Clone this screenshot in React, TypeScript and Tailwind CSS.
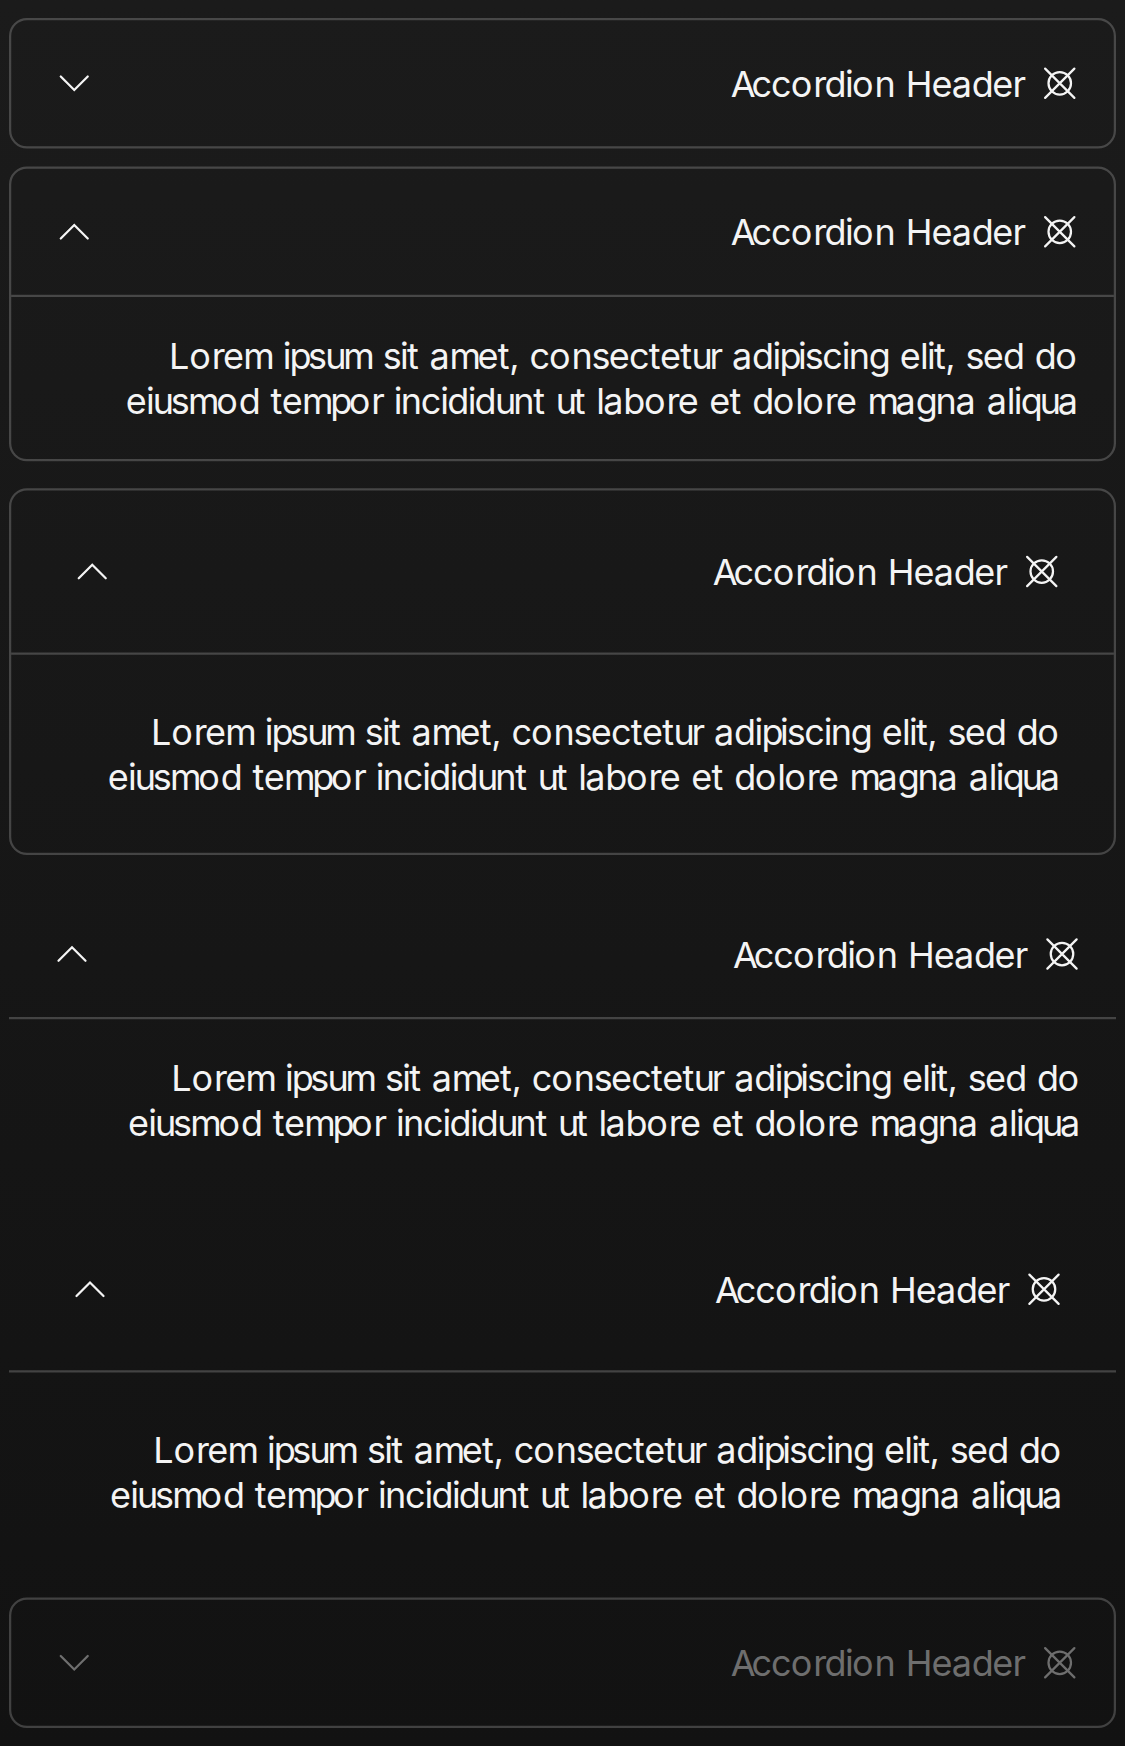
import clsx from "clsx";

const LOREM =
  "Lorem ipsum sit amet, consectetur adipiscing elit, sed do eiusmod tempor incididunt ut labore et dolore magna aliqua";

/* Per-glyph tracking, in the 16px space the accordions are laid out in. */
const TRACKING: Record<string, string> = {
  A: "tracking-[-1.8px]",
  H: "tracking-[-0.49px]",
  L: "tracking-[-0.05px]",
  a: "tracking-[-0.08px]",
  b: "tracking-[-0.6px]",
  c: "tracking-[-0.44px]",
  d: "tracking-[-0.7px]",
  e: "tracking-[-0.33px]",
  g: "tracking-[-1.01px]",
  i: "tracking-[-0.81px]",
  l: "tracking-[-0.78px]",
  m: "tracking-[-1.52px]",
  n: "tracking-[-0.55px]",
  o: "tracking-[0.41px]",
  p: "tracking-[-1.6px]",
  q: "tracking-[-1.4px]",
  r: "tracking-[-1.02px]",
  s: "tracking-[-0.78px]",
  t: "tracking-[-0.23px]",
  u: "tracking-[-1.46px]",
  ",": "tracking-[-0.61px]",
  " ": "tracking-[0.5px]",
};

function SnappedText({ text }: { text: string }) {
  return (
    <>
      {text.split("").map((char, i) => (
        <span key={i} className={TRACKING[char]}>{char}</span>
      ))}
    </>
  );
}

function Chevron({ open }: { open: boolean }) {
  return (
    <svg viewBox="0 0 24 24" className="size-6 shrink-0" fill="none" stroke="currentColor" strokeWidth="1" strokeLinecap="round">
      <path d={open ? "M6 15 12 9 18 15" : "M6 9 12 15 18 9"} />
    </svg>
  );
}

function TargetIcon() {
  return (
    <svg viewBox="0 0 16 16" className="size-4 shrink-0" fill="none" stroke="currentColor" strokeWidth="1" strokeLinecap="round">
      <circle cx="8" cy="8" r="5" />
      <path d="M1.5 1.5 14.5 14.5M14.5 1.5 1.5 14.5" />
    </svg>
  );
}

type AccordionProps = {
  open?: boolean;
  bordered?: boolean;
  roomy?: boolean;
  disabled?: boolean;
  className?: string;
};

function Accordion({ open = false, bordered = false, roomy = false, disabled = false, className }: AccordionProps) {
  return (
    <section className={clsx(bordered && "rounded-lg border border-white/20", className)}>
      <h3
        className={clsx(
          "flex items-center justify-between",
          roomy ? "h-[72px] px-6" : "h-14 px-4",
          disabled && "text-[#6e6e6e]",
        )}
      >
        <Chevron open={open} />
        <span className="flex items-center gap-2">
          <span className="whitespace-pre">
            <SnappedText text="Accordion Header" />
          </span>
          <TargetIcon />
        </span>
      </h3>
      {open && (
        <p className={clsx("border-t border-white/20 text-right", roomy ? "p-6" : "p-4")}>
          <SnappedText text={LOREM} />
        </p>
      )}
    </section>
  );
}

export default function App() {
  return (
    <div className="h-[1746px] w-[1125px] overflow-hidden bg-linear-to-b from-[#1b1b1b] to-[#121212]">
      <main className="flex h-[776px] w-[500px] origin-top-left scale-[2.25] flex-col px-1 pt-2 font-['Inter',sans-serif] text-base leading-5 text-[#f4f4f4] [font-kerning:none]">
        <Accordion bordered />
        <Accordion bordered open className="mt-2" />
        <Accordion bordered open roomy className="mt-3" />
        <Accordion open className="mt-4" />
        <Accordion open roomy className="mt-3" />
        <Accordion bordered disabled className="mt-3" />
      </main>
    </div>
  );
}
